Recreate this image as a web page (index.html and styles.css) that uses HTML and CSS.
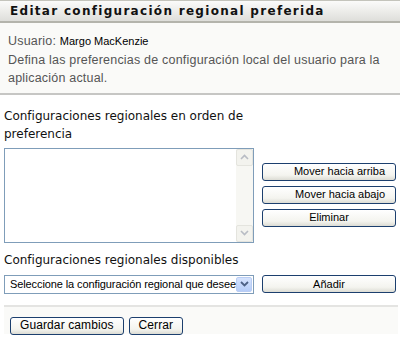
FILE: index.html
```html
<!DOCTYPE html>
<html lang="es">
<head>
<meta charset="utf-8">
<link rel="stylesheet" href="styles.css">
</head>
<body>
<div class="header">Editar configuración regional preferida</div>
<div class="info">
  <div class="line">Usuario: <span class="user">Margo MacKenzie</span></div>
  <div class="line">Defina las preferencias de configuración local del usuario para la aplicación actual.</div>
</div>
<div class="main">
  <div class="label">Configuraciones regionales en orden de preferencia</div>
  <div class="row">
    <div class="listbox">
      <div class="scroll">
        <div class="sbtn"><svg width="9" height="6" viewBox="0 0 9 6"><path d="M1 5 L4.5 1.5 L8 5" fill="none" stroke="#b8bcc4" stroke-width="1.6"/></svg></div>
        <div class="track"></div>
        <div class="sbtn"><svg width="9" height="6" viewBox="0 0 9 6"><path d="M1 1 L4.5 4.5 L8 1" fill="none" stroke="#b8bcc4" stroke-width="1.6"/></svg></div>
      </div>
    </div>
    <div class="btns">
      <button class="btn wide">Mover hacia arriba</button>
      <button class="btn wide">Mover hacia abajo</button>
      <button class="btn wide center">Eliminar</button>
    </div>
  </div>
  <div class="label avail">Configuraciones regionales disponibles</div>
  <div class="row2">
    <div class="select">
      <span class="seltext">Seleccione la configuración regional que desee</span>
      <span class="drop"><svg width="9" height="6" viewBox="0 0 9 6"><path d="M1 1 L4.5 4.5 L8 1" fill="none" stroke="#4d6185" stroke-width="1.8"/></svg></span>
    </div>
    <button class="btn wide center">Añadir</button>
  </div>
  <div class="footer">
    <button class="btn big">Guardar cambios</button>
    <button class="btn big">Cerrar</button>
  </div>
</div>
</body>
</html>
```
FILE: styles.css
```css
html, body {
  margin: 0;
  padding: 0;
  background: #ffffff;
}
body {
  width: 400px;
  height: 344px;
  overflow: hidden;
  font-family: "DejaVu Sans", sans-serif;
}
.header {
  height: 20px;
  border-top: 1px solid #c4c4bc;
  border-bottom: 2px solid #b4b4ac;
  background: linear-gradient(#fbfbfa, #dededa);
  font-weight: bold;
  font-size: 12px;
  letter-spacing: 1.3px;
  line-height: 20px;
  padding-left: 10px;
  color: #111;
}
.info {
  background: #fafaf8;
  border-bottom: 2px solid #c6c6c4;
  padding: 9px 8px 5px 8px;
  font-family: "Liberation Sans", sans-serif;
  font-size: 12.5px;
  line-height: 18.5px;
  color: #555;
  letter-spacing: 0.2px;
}
.user {
  font-family: "Liberation Sans", sans-serif;
  font-size: 11px;
  color: #000;
  letter-spacing: 0;
}
.main {
  padding: 12px 4px 0 4px;
}
.label {
  font-size: 12px;
  line-height: 18px;
  color: #111;
  width: 260px;
}
.row {
  display: flex;
  align-items: flex-start;
  margin-top: 5px;
}
.listbox {
  width: 248px;
  height: 93px;
  border: 1px solid #7f9db9;
  background: #fff;
  display: flex;
  justify-content: flex-end;
}
.scroll {
  width: 17px;
  height: 93px;
  background: #f7f7f3;
  display: flex;
  flex-direction: column;
}
.sbtn {
  width: 15px;
  height: 15px;
  border: 1px solid #e4e4de;
  border-radius: 2px;
  background: #f3f3ee;
  display: flex;
  align-items: center;
  justify-content: center;
}
.track { flex: 1; }
.btns {
  display: flex;
  flex-direction: column;
  gap: 5px;
  margin-left: 8px;
  margin-top: 15px;
}
.btn {
  font-family: "Liberation Sans", sans-serif;
  font-size: 11px;
  height: 18px;
  padding: 0 7px;
  border: 1px solid #1c3f6e;
  border-radius: 3px;
  background: linear-gradient(#ffffff, #f4f4ef 70%, #dcdcd4);
  color: #000;
  line-height: 15px;
  letter-spacing: 0;
}
.btn.wide {
  width: 134px;
  text-align: right;
  padding-right: 10px;
}
.btn.center {
  text-align: center;
  padding: 0;
}
.btn.big {
  font-size: 12px;
  letter-spacing: 0.1px;
  padding: 0 9px;
}
.avail {
  margin-top: 8px;
}
.row2 {
  display: flex;
  align-items: center;
  margin-top: 6px;
}
.select {
  width: 247px;
  height: 15px;
  border: 1px solid #7f9db9;
  padding: 1px 0 1px 1px;
  display: flex;
  align-items: center;
  font-family: "Liberation Sans", sans-serif;
  font-size: 11px;
  color: #000;
  margin-right: 8px;
}
.seltext {
  flex: 1;
  overflow: hidden;
  white-space: nowrap;
  padding-left: 4px;
  letter-spacing: -0.1px;
}
.drop {
  width: 16px;
  height: 15px;
  background: linear-gradient(#d6e3fd, #b6cdf8);
  border: 1px solid #b9cdf4;
  box-sizing: border-box;
  border-radius: 2px;
  display: flex;
  align-items: center;
  justify-content: center;
  margin-right: 1px;
}
.footer {
  margin-top: 11px;
  width: 388px;
  border-top: 2px solid #e4e4e2;
  background: linear-gradient(#fafaf8, #fafaf8) no-repeat 0 0 / 100% 27px;
  padding: 10px 0 0 6px;
  display: flex;
  gap: 5px;
}
```
